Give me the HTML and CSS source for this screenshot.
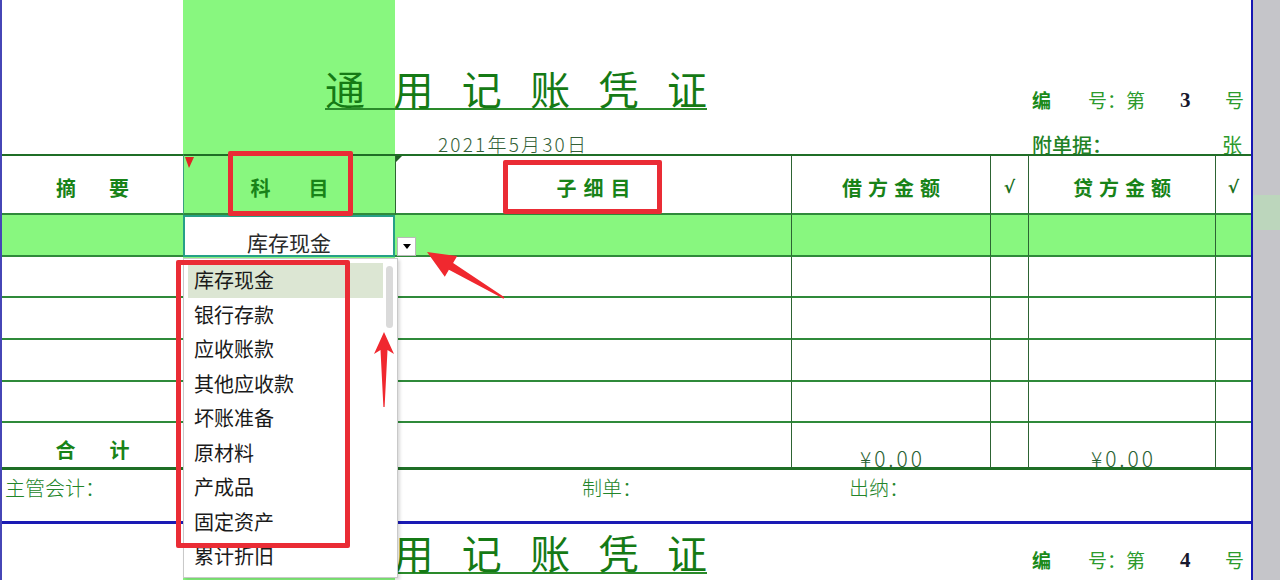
FILE: index.html
```html
<!DOCTYPE html>
<html lang="zh-CN">
<head>
<meta charset="utf-8">
<title>通用记账凭证</title>
<link rel="stylesheet" href="styles.css">
</head>
<body>
<div class="screen">
  <div class="sheet">
    <div class="col-hl"></div>

    <div class="top-mid r1">
      <div class="title"><span>通</span><span>用</span><span>记</span><span>账</span><span>凭</span><span>证</span></div>
      <div class="date">2021年5月30日</div>
    </div>
    <div class="top-right r1">
      <div class="num-line"><span class="bh">编</span><span class="lt">号：第</span><span class="no">3</span><span class="lt">号</span></div>
      <div class="att-line"><span class="att">附单据：</span><span class="lt">张</span></div>
    </div>

    <div class="hd r2 c1"><span class="ls33">摘要</span></div>
    <div class="hd r2 c2 tl"><span class="ls38">科目</span></div>
    <div class="hd r2 c3 vl"><span class="ls7">子细目</span></div>
    <div class="hd r2 c4 vl"><span class="ls6">借方金额</span></div>
    <div class="hd r2 c5 vl chk">√</div>
    <div class="hd r2 c6 vl"><span class="ls6">贷方金额</span></div>
    <div class="hd r2 c7 vl chk">√</div>

    <div class="cell hl r3 c1"></div>
    <div class="editor r3 c2">库存现金<span class="dd-btn"></span></div>
    <div class="cell hl r3 c3"></div>
    <div class="cell hl r3 c4 vl"></div>
    <div class="cell hl r3 c5 vl"></div>
    <div class="cell hl r3 c6 vl"></div>
    <div class="cell hl r3 c7 vl"></div>

    <div class="cell r4 c1"></div><div class="cell r4 c3"></div><div class="cell r4 c4 vl"></div><div class="cell r4 c5 vl"></div><div class="cell r4 c6 vl"></div><div class="cell r4 c7 vl"></div>
    <div class="cell r5 c1"></div><div class="cell r5 c3"></div><div class="cell r5 c4 vl"></div><div class="cell r5 c5 vl"></div><div class="cell r5 c6 vl"></div><div class="cell r5 c7 vl"></div>
    <div class="cell r6 c1"></div><div class="cell r6 c3"></div><div class="cell r6 c4 vl"></div><div class="cell r6 c5 vl"></div><div class="cell r6 c6 vl"></div><div class="cell r6 c7 vl"></div>
    <div class="cell r7 c1"></div><div class="cell r7 c3"></div><div class="cell r7 c4 vl"></div><div class="cell r7 c5 vl"></div><div class="cell r7 c6 vl"></div><div class="cell r7 c7 vl"></div>

    <div class="tot r8 c1 sum"><span class="ls34">合计</span></div>
    <div class="tot r8 c3"></div>
    <div class="tot r8 c4 vl money">¥0.00</div>
    <div class="tot r8 c5 vl"></div>
    <div class="tot r8 c6 vl money">¥0.00</div>
    <div class="tot r8 c7 vl"></div>

    <div class="foot r9 c1 p-zg">主管会计：</div>
    <div class="foot r9 c3 p-zd">制单：</div>
    <div class="foot r9 c4 p-cn">出纳：</div>

    <div class="blue-line r10"></div>

    <div class="top-mid next r11">
      <div class="title"><span>通</span><span>用</span><span>记</span><span>账</span><span>凭</span><span>证</span></div>
    </div>
    <div class="top-right next r11">
      <div class="num-line"><span class="bh">编</span><span class="lt">号：第</span><span class="no">4</span><span class="lt">号</span></div>
    </div>

    <div class="dropdown">
      <div class="item sel">库存现金</div>
      <div class="item">银行存款</div>
      <div class="item">应收账款</div>
      <div class="item">其他应收款</div>
      <div class="item">坏账准备</div>
      <div class="item">原材料</div>
      <div class="item">产成品</div>
      <div class="item">固定资产</div>
      <div class="item">累计折旧</div>
      <div class="thumb"></div>
    </div>

    <div class="redbox box-km"></div>
    <div class="redbox box-zxm"></div>
    <div class="redbox box-list"></div>

    <svg class="marks" viewBox="0 0 1253 580" xmlns="http://www.w3.org/2000/svg">
      <polygon points="185,157 194,157 189,168" fill="#e02424"/>
      <polygon points="396,156 402,156 396,162" fill="#1f5e24"/>
      <polygon points="427,252 457.2,256.1 453.1,263 504.5,297.2 503.5,298.8 448.9,269.8 444.8,276.7" fill="#f0282f"/>
      <polygon points="384,332 394,354 387.5,350 384.6,407 383.4,407 380.5,350 374,354" fill="#f0282f"/>
    </svg>
  </div>
  <div class="strip"><div class="strip-hl"></div></div>
</div>
</body>
</html>
```

FILE: styles.css
```css
html, body {
  margin: 0;
  padding: 0;
  background: #ffffff;
}
body {
  width: 1280px;
  height: 580px;
  overflow: hidden;
  font-family: "Noto Sans CJK SC", "Noto Sans", sans-serif;
}

.screen {
  display: flex;
  height: 580px;
}

.sheet {
  position: relative;
  width: 1249px;
  height: 580px;
  border-left: 2px solid #4646b6;
  border-right: 2px solid #1616b2;
  display: grid;
  grid-template-columns: 181px 212px 396px 199px 38px 187px 36px;
  grid-template-rows: 154px 61px 42px 41px 42px 42px 41px 47px 51px 3px 56px;
  overflow: hidden;
}

.strip {
  flex: 1;
  background: #c5c5c9;
}
.strip-hl {
  margin-top: 195px;
  height: 35px;
  background: #bcd6bc;
}

/* grid placement */
.r1 { grid-row: 1; }
.r2 { grid-row: 2; }
.r3 { grid-row: 3; }
.r4 { grid-row: 4; }
.r5 { grid-row: 5; }
.r6 { grid-row: 6; }
.r7 { grid-row: 7; }
.r8 { grid-row: 8; }
.r9 { grid-row: 9; }
.r10 { grid-row: 10; }
.r11 { grid-row: 11; }
.c1 { grid-column: 1; }
.c2 { grid-column: 2; }
.c3 { grid-column: 3; }
.c4 { grid-column: 4; }
.c5 { grid-column: 5; }
.c6 { grid-column: 6; }
.c7 { grid-column: 7; }

.col-hl {
  grid-column: 2;
  grid-row: 1 / -1;
  background: #88f77f;
}

/* top area */
.top-mid {
  grid-column: 2 / 5;
  padding: 68px 0 0 142px;
  display: flex;
  flex-direction: column;
  align-items: flex-start;
}
.top-mid.next {
  padding-top: 8px;
}
.title {
  display: flex;
  gap: 28.4px;
  font-size: 40px;
  line-height: 40px;
  font-weight: 400;
  color: #157a15;
  border-bottom: 2px solid #2a8a2a;
}
.date {
  margin: 24px 0 0 113px;
  font-size: 19px;
  line-height: 20px;
  letter-spacing: 2.2px;
  font-weight: 300;
  color: #335f37;
}

.top-right {
  grid-column: 6 / 8;
  padding: 88px 0 0 4px;
  display: flex;
  flex-direction: column;
  row-gap: 21px;
}
.top-right.next {
  padding-top: 24px;
}
.num-line {
  display: grid;
  grid-template-columns: 56px 92px 45px auto;
  font-size: 19px;
  line-height: 24px;
}
.att-line {
  display: grid;
  grid-template-columns: 190px auto;
  font-size: 20px;
  line-height: 24px;
}
.bh {
  font-weight: 700;
  color: #1a8a1a;
}
.lt {
  color: #2c9a2c;
  font-weight: 400;
}
.att {
  color: #1f8226;
  font-weight: 500;
}
.no {
  font-family: "Liberation Serif", serif;
  font-weight: 700;
  font-size: 21px;
  color: #17172c;
}

/* header row */
.hd {
  border-top: 2px solid #1f6e26;
  border-bottom: 2px solid #2f8a3a;
  display: flex;
  align-items: center;
  justify-content: center;
  padding-top: 6px;
  font-size: 20px;
  font-weight: 700;
  color: #188318;
}
.hd.tl {
  border-left: 1px solid #3aa07f;
}
.chk {
  font-family: "DejaVu Sans", sans-serif;
  font-size: 17px;
  padding-top: 4px;
  color: #1a701a;
}
.vl {
  border-left: 1px solid #2d6433;
}
.ls33 { letter-spacing: 33px; padding-left: 33px; }
.ls34 { letter-spacing: 34px; padding-left: 34px; }
.ls38 { letter-spacing: 38px; padding-left: 38px; }
.ls7 { letter-spacing: 7px; padding-left: 7px; }
.ls6 { letter-spacing: 6px; padding-left: 6px; }

/* body rows */
.cell {
  border-bottom: 2px solid #2f8a3a;
}
.hl {
  background: #88f77f;
}

.editor {
  position: relative;
  background: #ffffff;
  border: 2px solid #26a087;
  display: flex;
  justify-content: center;
  align-items: flex-end;
  font-size: 21px;
  line-height: 26px;
  color: #2a2a2a;
}
.dd-btn {
  position: absolute;
  left: calc(100% + 4px);
  top: 20px;
  width: 17px;
  height: 17px;
  background: #ffffff;
  border: 1px solid #b9b9b9;
  display: flex;
  align-items: center;
  justify-content: center;
}
.dd-btn::after {
  content: "";
  border-left: 4px solid transparent;
  border-right: 4px solid transparent;
  border-top: 5px solid #000000;
}

.tot {
  border-bottom: 3px solid #1e6e26;
}
.sum {
  display: flex;
  align-items: center;
  justify-content: center;
  padding-top: 8px;
  font-size: 20px;
  font-weight: 700;
  color: #188318;
}
.money {
  display: flex;
  align-items: flex-end;
  justify-content: center;
  padding-left: 3px;
  font-size: 21px;
  line-height: 18px;
  letter-spacing: 3px;
  font-weight: 300;
  color: #2a6233;
}

.foot {
  padding-top: 6px;
  font-size: 20px;
  line-height: 24px;
  font-weight: 300;
  color: #23852a;
}
.p-zg { padding-left: 3px; }
.p-zd { padding-left: 187px; }
.p-cn { padding-left: 58px; }

.blue-line {
  grid-column: 1 / -1;
  background: #1a1ab4;
}

/* dropdown list overlay */
.dropdown {
  position: absolute;
  left: 181px;
  top: 258px;
  width: 215px;
  height: 320px;
  box-sizing: border-box;
  padding: 4px 0 0 4px;
  background: #ffffff;
  border: 1px solid #c9c9c9;
  box-shadow: 2px 2px 3px rgba(0, 0, 0, 0.15);
  z-index: 5;
}
.item {
  width: 195px;
  height: 34.5px;
  line-height: 34.5px;
  padding-left: 6px;
  box-sizing: border-box;
  font-size: 20px;
  color: #1a1a1a;
}
.item.sel {
  background: #dce6d3;
}
.thumb {
  position: absolute;
  left: 202px;
  top: 7px;
  width: 7px;
  height: 62px;
  border-radius: 4px;
  background: #dadada;
}

/* annotation boxes */
.redbox {
  position: absolute;
  box-sizing: border-box;
  border: 5px solid #ea2c35;
  border-radius: 2px;
  z-index: 6;
}
.box-km { left: 226px; top: 151px; width: 125px; height: 65px; }
.box-zxm { left: 501px; top: 160px; width: 159px; height: 54px; }
.box-list { left: 174px; top: 260px; width: 174px; height: 288px; }

.marks {
  position: absolute;
  left: -2px;
  top: 0;
  width: 1253px;
  height: 580px;
  z-index: 7;
  pointer-events: none;
}
```
